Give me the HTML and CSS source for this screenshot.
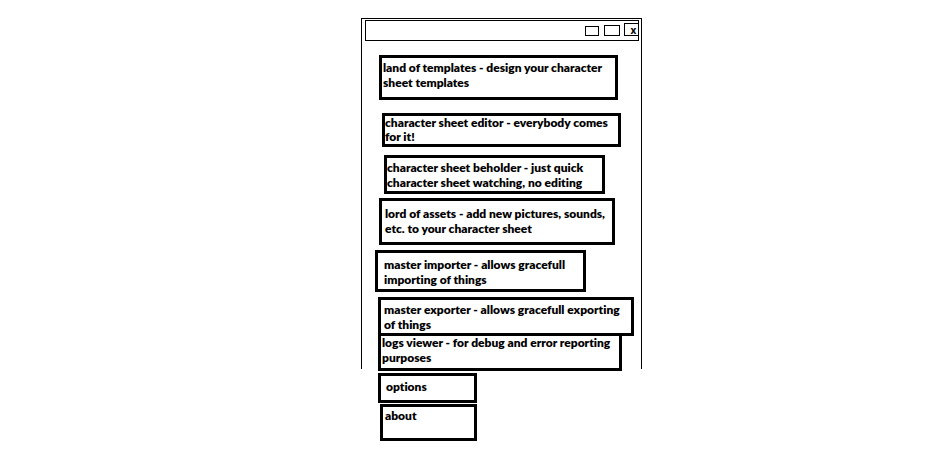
FILE: index.html
```html
<!DOCTYPE html>
<html lang="en">
<head>
<meta charset="utf-8">
<title>Character sheet tools</title>
<link rel="stylesheet" href="styles.css">
</head>
<body>
<main class="page">
  <section class="window">
    <header class="titlebar">
      <button class="control minimize" type="button" aria-label="Minimize"></button>
      <button class="control maximize" type="button" aria-label="Maximize"></button>
      <button class="control close" type="button" aria-label="Close">x</button>
    </header>
    <nav class="menu">
      <button class="item templates" type="button">land of templates - design your character sheet templates</button>
      <button class="item editor" type="button">character sheet editor - everybody comes for it!</button>
      <button class="item beholder" type="button">character sheet beholder - just quick character sheet watching, no editing</button>
      <button class="item assets" type="button">lord of assets - add new pictures, sounds, etc. to your character sheet</button>
      <button class="item importer" type="button">master importer - allows gracefull importing of things</button>
      <button class="item exporter" type="button">master exporter - allows gracefull exporting of things</button>
      <button class="item logs" type="button">logs viewer - for debug and error reporting purposes</button>
    </nav>
  </section>
  <nav class="menu extra">
    <button class="item options" type="button">options</button>
    <button class="item about" type="button">about</button>
  </nav>
</main>
</body>
</html>
```
FILE: styles.css
```css
* { box-sizing: border-box; }

body {
  margin: 0;
  background: #fff;
  color: #000;
  font-family: Lato, "Liberation Sans", sans-serif;
}

.page {
  display: grid;
  grid-template-columns: 361fr minmax(281px, 281fr) 306fr;
  padding-top: 18px;
}

.window {
  grid-column: 2;
  border: 1px solid #000;
  border-bottom: 0;
  padding: 1px 2px 0 3px;
}

.titlebar {
  display: flex;
  justify-content: flex-end;
  align-items: flex-end;
  height: 21px;
  border: 1px solid #000;
  padding-bottom: 4px;
}

.control {
  border: 1px solid #000;
  background: #fff;
  padding: 0;
  color: #000;
  font: bold 10px/10px "Open Sans", sans-serif;
}

.minimize { width: 14px; height: 10px; margin-right: 5px; }
.maximize { width: 16px; height: 11px; margin-right: 4px; }
.close {
  width: 14px;
  height: 13px;
  border-right: 0;
  padding-left: 4px;
}

.menu {
  display: flex;
  flex-direction: column;
  padding-top: 14px;
}

.window .menu { margin-bottom: -2px; }

.item {
  border: 3px solid #000;
  background: #fff;
  color: #000;
  text-align: left;
  font: 800 12px/15px Lato, "Liberation Sans", sans-serif;
  font-variant-ligatures: none;
}

.templates { margin: 0 21px 13px 14px; padding: 2px 1px 7px; }
.editor { margin: 0 18px 8px 17px; padding: 0; line-height: 14px; }
.beholder { margin: 0 34px 4px 19px; padding: 2px 0 1px; }
.assets { margin: 0 24px 5px 14px; padding: 5px 0 6px 3px; }
.importer { margin: 0 53px 5px 10px; padding: 4px 6px 2px; }
.exporter { position: relative; margin: 0 5px 0 13px; padding: 2px 3px 1px; }
.logs { margin: -4px 17px 0 13px; padding: 0 0 3px 1px; }

.extra {
  grid-column: 2;
  align-items: flex-start;
  padding: 4px 0 0 17px;
}

.options { width: 99px; margin-bottom: 1px; padding: 3px 5px 6px; }
.about { width: 97px; margin-left: 2px; padding: 1px 2px 15px; }
```
